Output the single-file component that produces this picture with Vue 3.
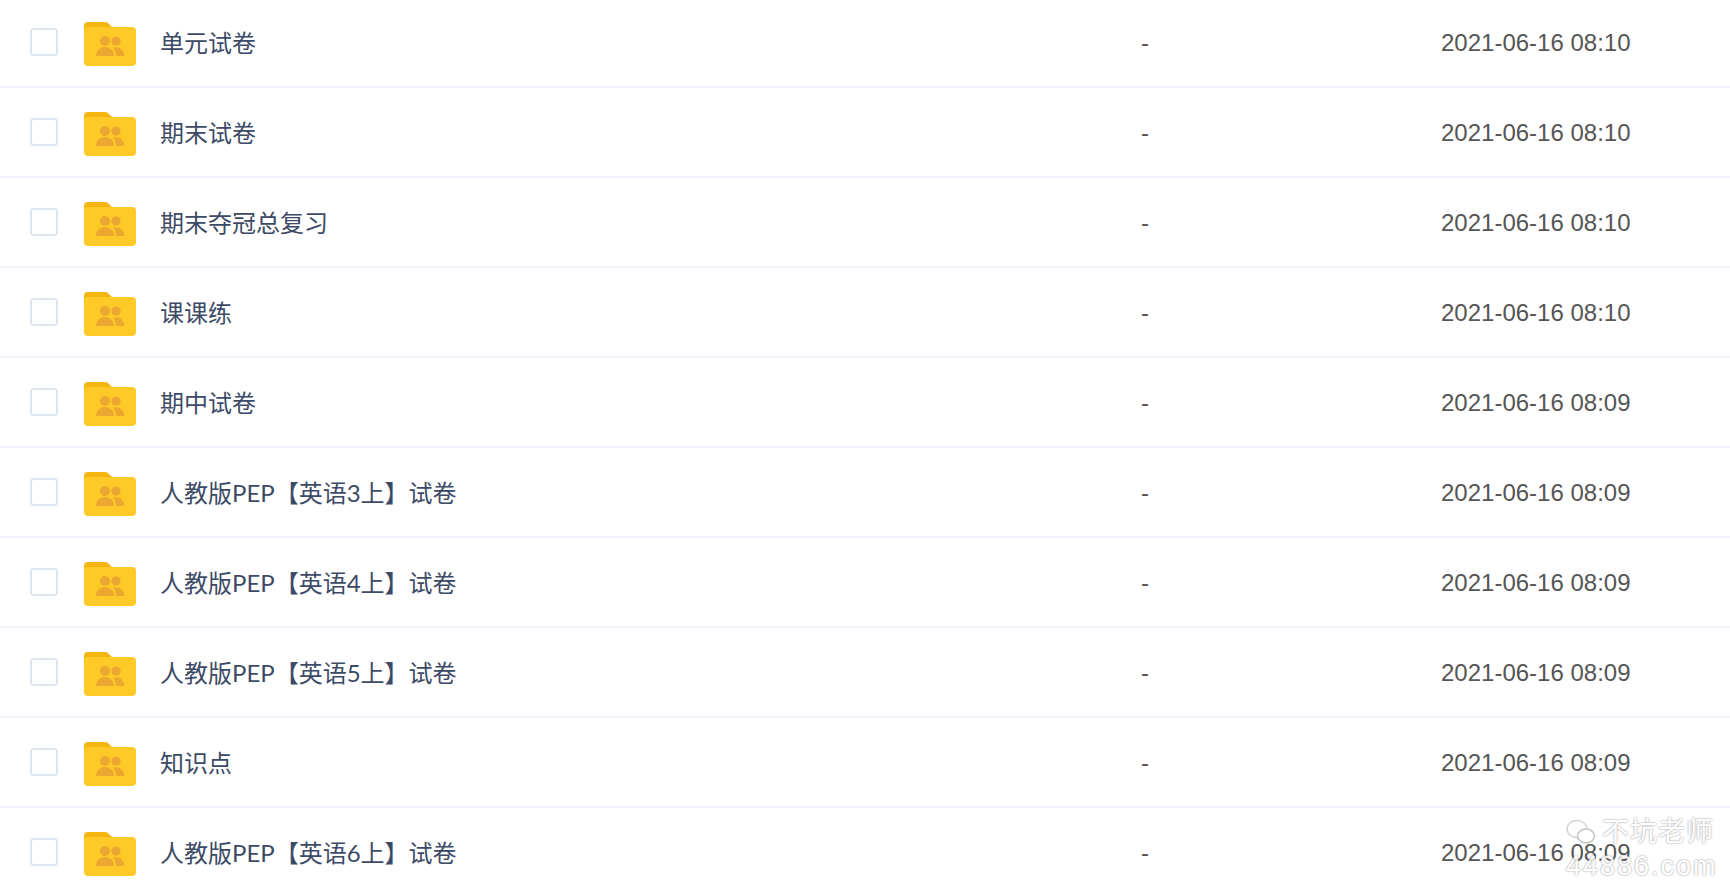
<script setup>
const rows = [
  ['单元试卷', '2021-06-16 08:10'],
  ['期末试卷', '2021-06-16 08:10'],
  ['期末夺冠总复习', '2021-06-16 08:10'],
  ['课课练', '2021-06-16 08:10'],
  ['期中试卷', '2021-06-16 08:09'],
  ['人教版PEP【英语3上】试卷', '2021-06-16 08:09'],
  ['人教版PEP【英语4上】试卷', '2021-06-16 08:09'],
  ['人教版PEP【英语5上】试卷', '2021-06-16 08:09'],
  ['知识点', '2021-06-16 08:09'],
  ['人教版PEP【英语6上】试卷', '2021-06-16 08:09']
]
</script>

<template>
  <div class="page">
    <div class="list">
      <div v-for="(r, i) in rows" :key="i" class="row">
        <span class="check"></span>
        <svg class="folder" viewBox="0 0 52 45" width="52" height="45">
          <path d="M0 5a4 4 0 0 1 4-4h17a5 5 0 0 1 4 2l4 4v10H0z" fill="#f5b511" />
          <rect x="0" y="6" width="52" height="39" rx="4" fill="#ffca28" />
          <g fill="#eba72f">
            <circle cx="21" cy="20" r="5" />
            <circle cx="32" cy="20" r="4.600" />
            <path d="M12 35c0-5.500 4-9 9-9s9 3.500 9 9z" />
            <path d="M29 26.500c6-1.500 11 2 11.500 8.500H32c0-3-1-6.500-3-8.500z" />
          </g>
        </svg>
        <span class="name">{{ r[0] }}</span>
        <span class="size">-</span>
        <span class="date">{{ r[1] }}</span>
      </div>
    </div>
    <div class="mark">
      <div class="mark-top">
        <svg viewBox="0 0 30 26" width="30" height="26" class="wechat">
          <ellipse cx="11" cy="10" rx="10" ry="8.500" fill="#fff" stroke="#ccc" stroke-width="1.500" />
          <ellipse cx="20" cy="17" rx="8.500" ry="7" fill="#fff" stroke="#bbb" stroke-width="1.500" />
        </svg>
        <span>不坑老师</span>
      </div>
      <div class="mark-bottom">44886.com</div>
    </div>
  </div>
</template>

<style scoped>
.page {
  position: relative;
  width: 1730px;
  height: 892px;
  overflow: hidden;
  background: #fff;
  font-family: "Liberation Sans", "Noto Sans CJK SC", sans-serif;
}
.list {
  margin-top: -2px;
}
.row {
  display: flex;
  align-items: center;
  box-sizing: border-box;
  height: 90px;
  border-bottom: 2px solid #f1f4fc;
  font-size: 24px;
}
.check {
  box-sizing: border-box;
  flex: none;
  width: 28px;
  height: 28px;
  margin-left: 30px;
  border: 2px solid #dde5ee;
  border-radius: 4px;
}
.folder {
  flex: none;
  margin-left: 26px;
  margin-top: 2px;
}
.name {
  flex: none;
  width: 981px;
  margin-left: 24px;
  margin-bottom: 2px;
  font-family: Lato, "Noto Sans CJK SC", sans-serif;
  color: #3d4a66;
}
.size {
  flex: none;
  width: 300px;
  margin-top: 2px;
  color: #555;
}
.date {
  flex: none;
  margin-top: 2px;
  color: #555;
}
.mark {
  position: absolute;
  left: 1566px;
  top: 816px;
  width: 156px;
  color: #fff;
  opacity: 0.85;
  text-shadow: 0 0 2px #aaa, 0 0 2px #aaa;
}
.mark-top {
  display: flex;
  align-items: center;
  font-size: 27px;
  line-height: 32px;
  letter-spacing: 1px;
}
.wechat {
  margin-right: 6px;
}
.mark-bottom {
  margin-top: 3px;
  font-size: 27px;
  line-height: 30px;
  letter-spacing: 2px;
  white-space: nowrap;
}
</style>
